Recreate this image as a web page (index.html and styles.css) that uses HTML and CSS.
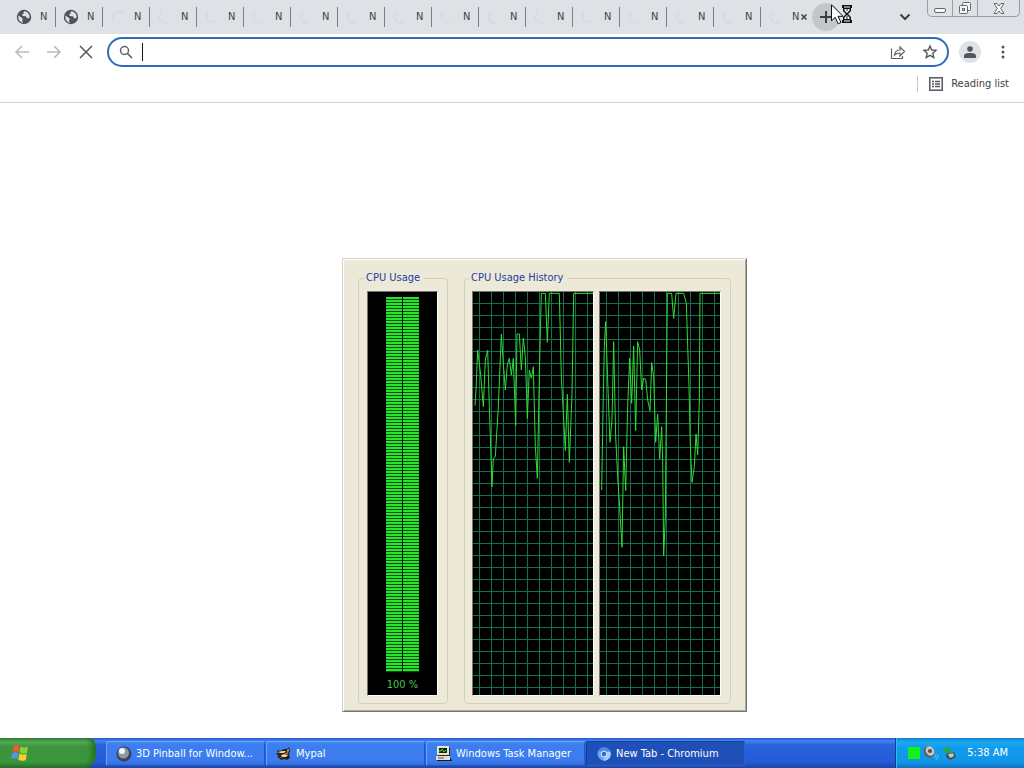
FILE: index.html
```html
<!DOCTYPE html>
<html lang="en">
<head>
<meta charset="utf-8">
<title>New Tab - Chromium</title>
<link rel="stylesheet" href="styles.css">
</head>
<body>
<svg class="defs" aria-hidden="true">
  <symbol id="globe" viewBox="0 0 16 16"><circle cx="8" cy="8" r="7.2" fill="#50545a"/><path d="M2.5 6.5 6 9l1 1.2-1 1 .8 2.6C4.500 13.300 2.300 11 2.300 8zM8.500 2.300c-1 .7-1.500 1.400-.6 2.200l-2 1.300 1 1.200 3 .3 1.300 2.200 2.400-.7c.4-3-1.800-5.900-5.100-6.500z" fill="#dee1e6"/></symbol>
  <symbol id="spin" viewBox="0 0 16 16"><path d="M5 2.500C1.500 5 1.500 10 5 12.500c2 1.300 4 1.500 6 .5" fill="none" stroke="#cddcea" stroke-width="1.600"/></symbol>
</svg>
<div class="screen">
  <header class="tabstrip">
    <div class="tabs" role="tablist">
      <button class="tab" role="tab"><svg><use href="#globe"/></svg><span>N</span></button>
      <button class="tab" role="tab"><svg><use href="#globe"/></svg><span>N</span></button>
      <button class="tab" role="tab"><svg class="turned"><use href="#spin"/></svg><span>N</span></button>
      <button class="tab" role="tab"><svg><use href="#spin"/></svg><span>N</span></button>
      <button class="tab" role="tab"><svg><use href="#spin"/></svg><span>N</span></button>
      <button class="tab" role="tab"><svg><use href="#spin"/></svg><span>N</span></button>
      <button class="tab" role="tab"><svg><use href="#spin"/></svg><span>N</span></button>
      <button class="tab" role="tab"><svg><use href="#spin"/></svg><span>N</span></button>
      <button class="tab" role="tab"><svg><use href="#spin"/></svg><span>N</span></button>
      <button class="tab" role="tab"><svg><use href="#spin"/></svg><span>N</span></button>
      <button class="tab" role="tab"><svg><use href="#spin"/></svg><span>N</span></button>
      <button class="tab" role="tab"><svg><use href="#spin"/></svg><span>N</span></button>
      <button class="tab" role="tab"><svg><use href="#spin"/></svg><span>N</span></button>
      <button class="tab" role="tab"><svg><use href="#spin"/></svg><span>N</span></button>
      <button class="tab" role="tab"><svg><use href="#spin"/></svg><span>N</span></button>
      <button class="tab" role="tab"><svg><use href="#spin"/></svg><span>N</span></button>
      <button class="tab current" role="tab" aria-selected="true"><svg><use href="#spin"/></svg><span>N</span></button>
    </div>
    <button class="tab-close" aria-label="Close tab"><svg width="6" height="6" viewBox="0 0 6 6"><path d="M.5.5l5 5M5.500.5l-5 5" stroke="#3c4043" stroke-width="1.500"/></svg></button>
    <button class="new-tab" aria-label="New tab"><svg width="12" height="12" viewBox="0 0 12 12"><path d="M6 0v12M0 6h12" stroke="#3c4043" stroke-width="2"/></svg></button>
    <button class="tab-search" aria-label="Search tabs"><svg width="12" height="8" viewBox="0 0 12 8"><path d="M1.500 1.500 6 6l4.500-4.500" fill="none" stroke="#3c4043" stroke-width="2"/></svg></button>
    <div class="window-buttons">
      <button class="small" aria-label="Minimize"><svg width="14" height="17" viewBox="0 0 14 17"><rect x="1.500" y="8.500" width="11" height="4" rx="1.500" fill="#f6f7f8" stroke="#62666b"/></svg></button>
      <button class="small" aria-label="Restore"><svg width="14" height="17" viewBox="0 0 14 17"><g fill="#f4f5f7" stroke="#62666b"><rect x="4.500" y="2.500" width="8" height="8" rx="1"/><rect x="1.500" y="5.500" width="8" height="8" rx="1"/><rect x="4.500" y="8.500" width="2" height="2"/></g></svg></button>
      <button class="large" aria-label="Close"><svg width="14" height="17" viewBox="0 0 14 17"><path d="M2 3.500h3l2 2.500 2-2.500h3L8.700 8.500l3.300 5H9L7 11l-2 2.500H2l3.300-5z" fill="#f6f7f8" stroke="#62666b"/></svg></button>
    </div>
  </header>

  <nav class="toolbar">
    <button aria-label="Back"><svg width="16" height="16" viewBox="0 0 16 16"><path d="M15 8H2M8 2 2 8l6 6" fill="none" stroke="#b9bbbe" stroke-width="1.600"/></svg></button>
    <button aria-label="Forward"><svg width="16" height="16" viewBox="0 0 16 16"><path d="M1 8h13M8 2l6 6-6 6" fill="none" stroke="#b9bbbe" stroke-width="1.600"/></svg></button>
    <button aria-label="Stop"><svg width="16" height="16" viewBox="0 0 16 16"><path d="M2 2l12 12M14 2 2 14" stroke="#54585d" stroke-width="1.500"/></svg></button>
    <div class="omnibox">
      <svg width="14" height="14" viewBox="0 0 14 14"><circle cx="5.500" cy="5.500" r="4" fill="none" stroke="#5f6368" stroke-width="1.500"/><path d="M8.500 8.500 13 13" stroke="#5f6368" stroke-width="1.700"/></svg>
      <span class="caret"></span>
      <input type="text" aria-label="Address and search bar">
      <button aria-label="Share"><svg width="16" height="16" viewBox="0 0 16 16"><path d="M1.500 4.500v10h11V12M4.500 11C5 7.500 7 6 10 6V3l4.500 4.500L10 12V9C7.500 9 6 9.500 4.500 11z" fill="none" stroke="#5f6368" stroke-width="1.200"/></svg></button>
      <button aria-label="Bookmark this tab"><svg width="16" height="16" viewBox="0 0 16 16"><path d="M8 2l1.700 4 4.300.4-3.200 2.900 1 4.300L8 11.300l-3.800 2.300 1-4.300L2 6.400 6.300 6z" fill="none" stroke="#54585d" stroke-width="1.400"/></svg></button>
    </div>
    <button class="profile" aria-label="Profile"><svg width="12" height="12" viewBox="0 0 12 12"><circle cx="6" cy="3" r="2.800" fill="#50555e"/><path d="M0 12V9.500C0 7.800 3 7 6 7s6 .8 6 2.500V12z" fill="#50555e"/></svg></button>
    <button aria-label="Menu"><svg width="4" height="14" viewBox="0 0 4 14"><g fill="#54585d"><circle cx="2" cy="2" r="1.500"/><circle cx="2" cy="7" r="1.500"/><circle cx="2" cy="12" r="1.500"/></g></svg></button>
  </nav>

  <div class="bookmarks">
    <button class="reading"><svg width="14" height="14" viewBox="0 0 14 14"><rect x=".8" y=".8" width="12.400" height="12.400" fill="none" stroke="#54585d" stroke-width="1.500"/><path d="M3 4.500h2M3 7h2M3 9.500h2M6 4.500h5M6 7h5M6 9.500h5" stroke="#54585d" stroke-width="1.300"/></svg><span>Reading list</span></button>
  </div>

  <main class="page"></main>

  <footer class="taskbar">
    <button class="start" aria-label="Start"><svg width="20" height="20" viewBox="0 0 20 20"><path d="M3.500 3.500Q7 1 9.500 3L8.500 9Q5.500 7.500 2.500 9z" fill="#ee5a2a"/><path d="M10.500 3.500Q14 5.500 18 3.500L17 10Q13 11.500 9.500 9.500z" fill="#8ccf3c"/><path d="M2.300 10Q5.500 8.500 8.300 10.200L7.300 16.300Q4 14.500 1.200 16z" fill="#5b92f0"/><path d="M9.300 10.600Q13 12.500 16.800 11L15.800 17Q12 18.800 8.300 16.800z" fill="#f8cf33"/></svg></button>
    <div class="tasks">
      <button class="task"><svg width="16" height="16" viewBox="0 0 16 16"><circle cx="8" cy="8" r="7.500" fill="#3b4350"/><circle cx="7.500" cy="7" r="5.500" fill="#8e9aa8"/><circle cx="6" cy="5" r="3" fill="#f3f6fa"/></svg><span>3D Pinball for Window...</span></button>
      <button class="task"><svg width="16" height="16" viewBox="0 0 16 16"><path d="M1 4l3 1 4-2 3 0 2-2 1 4-1 3 1 4-3 2-3-1-3 1-2-2-2-1 2-1-3-2 2-1z" fill="#2b211a"/><path d="M2 6l4-1 4 0-2 2-4 0zM5 9l4-1 3 1-2 2-4 0zM11 4l2-1-1 4z" fill="#ead6aa"/><path d="M9 7l3-1v2l-3 1zM3 11h3v1z" fill="#b56b2b"/></svg><span>Mypal</span></button>
      <button class="task"><svg width="16" height="16" viewBox="0 0 16 16"><path d="M2 1h11l1 1v8H2z" fill="#25251f"/><path d="M1 0h12v9H1z" fill="#e6e4d4"/><path d="M3 2h8v5H3z" fill="#09260d"/><path d="M3 5h2l1-2 2 3 2-2" fill="none" stroke="#46db48"/><path d="M1 11h13l2 4H1z" fill="#191919"/><path d="M0 10h14v4H0z" fill="#e3e0d0"/><path d="M2 12h6" stroke="#555"/></svg><span>Windows Task Manager</span></button>
      <button class="task active"><svg width="16" height="16" viewBox="0 0 16 16"><circle cx="8" cy="8" r="6.500" fill="#6ca4f3"/><path d="M8 5h6a6.500 6.500 0 0 1-7 9.500l3-5z" fill="#a8cbfa"/><path d="M8 8 2.500 4.500A6.500 6.500 0 0 1 14 5z" fill="#5189e4"/><circle cx="8" cy="8" r="3.200" fill="#cfe1fc"/><circle cx="8" cy="8" r="2.200" fill="#2b66d1"/></svg><span>New Tab - Chromium</span></button>
    </div>
    <div class="tray">
      <span class="meter"></span>
      <svg width="16" height="16" viewBox="0 0 16 16"><ellipse cx="6" cy="7" rx="5" ry="6" transform="rotate(-30 6 7)" fill="#5d6062"/><ellipse cx="7" cy="6" rx="4" ry="5" transform="rotate(-30 7 6)" fill="#c7c8c2"/><circle cx="7" cy="6" r="2" fill="#4c5052"/><path d="M11 13q2-1 2-4M13 15q2-2 2-5" fill="none" stroke="#8ab6d8"/></svg>
      <svg width="16" height="16" viewBox="0 0 16 16"><path d="M5 8l7-1 2 5-6 3-4-3z" fill="#464c4f"/><path d="M6 9l5-1 1 3-4 2z" fill="#c5cac7"/><path d="M1 5l6-4v3l4 4-2 1-4-3-1 3z" fill="#21ad36"/></svg>
      <time>5:38 AM</time>
    </div>
  </footer>

  <section class="manager" aria-label="CPU performance">
    <fieldset class="group usage">
      <legend>CPU Usage</legend>
      <div class="well gauge"><div class="bars"><i></i><i></i></div><output>100 %</output></div>
    </fieldset>
    <fieldset class="group history">
      <legend>CPU Usage History</legend>
      <div class="well graph"><svg viewBox="21 96 360 1209" preserveAspectRatio="none"><polyline points="27,437 30,390 35,270 44,345 52,440 58,300 65,270 70,440 78,680 82,595 88,590 97,440 106,222 112,310 118,390 124,315 130,295 136,345 142,295 149,497 153,222 160,222 166,330 172,235 178,290 184,475 190,330 196,355 202,320 208,560 214,655 221,300 226,100 238,100 244,247 250,100 280,100 286,350 292,460 298,572 304,403 310,607 318,400 323,100 383,100"/></svg></div>
      <div class="well graph"><svg viewBox="14 96 360 1209" preserveAspectRatio="none"><polyline points="19,690 24,400 27,260 31,185 37,360 44,547 50,480 55,245 61,530 67,650 73,740 80,862 85,560 91,692 97,440 103,295 109,430 115,258 121,512 127,245 133,270 139,390 145,355 151,357 157,420 164,452 169,308 175,350 181,547 187,462 193,597 199,500 202,600 205,887 210,770 214,345 216,100 229,100 235,175 242,100 265,100 273,130 281,380 285,560 290,667 297,620 302,522 307,585 312,420 314,100 376,100"/></svg></div>
    </fieldset>
  </section>

  <svg class="pointer" width="26" height="22" viewBox="0 0 26 22" aria-hidden="true">
    <path d="M1.500.8v16l3.700-3.500 3 6.500 2.800-1.300-3-6.200h5z" fill="#fff" stroke="#111"/>
    <path d="M12 1h10v3h-1v3l-3 3 3 3v3h1v3H12v-3h1v-3l3-3-3-3V4h-1z" fill="#111"/>
    <path d="M14 3h6M14 17h6" stroke="#fff"/><path d="M14.500 5h5v1.500L17 9l-2.500-2.500zM17 11l2.500 2.500V15h-5v-1.500z" fill="#fff"/><path d="M16 6h2M17 12v2M16 15h2" stroke="#111"/>
  </svg>
</div>
</body>
</html>
```

FILE: styles.css
```css
* { box-sizing: border-box; }
body {
  margin: 0;
  font: 11px/14px "DejaVu Sans Condensed", "Noto Sans", sans-serif;
  color: #3c4043;
}
button { margin: 0; padding: 0; border: 0; background: none; font: inherit; color: inherit; }
svg { display: block; flex: none; }
.defs { position: absolute; width: 0; height: 0; }
.screen { position: relative; display: flex; flex-direction: column; min-height: 100vh; background: #fff; overflow: hidden; }

.tabstrip { display: flex; align-items: flex-start; height: 34px; padding: 0 4px 0 9px; background: #dee1e6; }
.tabs { display: flex; }
.tab { display: flex; align-items: center; gap: 8px; width: 47px; height: 20px; margin-top: 7px; padding-left: 7px; border-right: 1px solid #7c8085; }
.tab svg { width: 16px; height: 16px; }
.tab .turned { transform: rotate(90deg); }
.tab.current { width: 40px; border: 0; }
.tab-close { padding: 14px 2px 0 0; }
.new-tab { display: grid; place-items: center; width: 28px; height: 28px; margin: 3px 0 0 3px; border-radius: 50%; background: #c3c6ca; }
.tab-search { margin: 13px 16px 0 auto; }
.window-buttons { display: flex; height: 17px; border: 1px solid #9a9ea4; border-top: 0; border-radius: 0 0 5px 5px; }
.window-buttons button { display: grid; place-items: center; }
.window-buttons .small { width: 25px; border-right: 1px solid #9a9ea4; }
.window-buttons .large { width: 41px; }

.toolbar { display: flex; align-items: center; gap: 16px; height: 36px; padding: 0 19px 0 14px; }
.omnibox { display: flex; flex: 1; align-items: center; height: 30px; margin-left: -3px; padding: 0 9px 0 10px; border: 2px solid #2e6cb8; border-radius: 15px; }
.caret { width: 1px; height: 18px; margin-left: 9px; background: #111; }
.omnibox input { flex: 1; min-width: 0; border: 0; outline: 0; background: none; font: inherit; }
.omnibox button + button { margin-left: 16px; }
.profile { display: grid; place-items: center; width: 22px; height: 22px; margin: 0 4px 0 -6px; border-radius: 50%; background: #dee1e6; }

.bookmarks { display: flex; justify-content: flex-end; align-items: center; height: 33px; padding: 0 15px 4px 0; border-bottom: 1px solid #d2d4d7; }
.reading { display: flex; align-items: center; gap: 8px; height: 16px; padding-left: 11px; border-left: 1px solid #c6c9cd; }
.page { flex: 1; }

.manager {
  position: absolute; left: 342px; top: 258px;
  display: flex; gap: 16px;
  padding: 12px 15px 7px;
  border: 1px solid; border-color: #d4d2c6 #77756d #77756d #d4d2c6;
  background: #ece9d8;
  box-shadow: inset 1px 1px #fff, inset -1px -1px #aca899;
}
.group { display: flex; min-width: 0; margin: 0; padding: 6px 9px 7px 8px; border: 1px solid #d2cfbd; border-radius: 4px; }
.group legend { padding: 0 4px 0 2px; margin-left: -3px; color: #1c3f9f; }
.well { height: 405px; border: 1px solid; border-color: #77756d #fff #fff #77756d; background-color: #000; }
.gauge { display: flex; flex-direction: column; align-items: center; width: 71px; padding-top: 5px; }
.bars { display: flex; gap: 1px; height: 375px; }
.bars i { width: 16px; background: repeating-linear-gradient(#25e62b 0 2px, #074c0b 2px 3px); }
.gauge output { margin-top: 6px; color: #45c74b; }
.history { gap: 5px; padding-left: 7px; }
.graph {
  width: 122px;
  background-image: linear-gradient(90deg, #14704c 1px, transparent 1px), linear-gradient(#14704c 1px, transparent 1px);
  background-size: 12px 12px;
  background-position: 6px 11px;
}
.graph svg { width: 100%; height: 100%; }
.graph polyline { fill: none; stroke: #2fdc35; stroke-width: 1px; vector-effect: non-scaling-stroke; }

.taskbar { display: flex; height: 30px; color: #fff; background: linear-gradient(#2458c8 0, #3f86f0 3px, #2a62dc 7px, #245bd8 24px, #1c45a8); }
.start { width: 96px; padding-left: 10px; border-radius: 0 8px 12px 0; background: linear-gradient(#388b39, #57ab56 4px, #3c933b 9px, #3a983a 24px, #2a712a); box-shadow: inset -4px 0 5px #276f2d; }
.tasks { display: flex; flex: 1; min-width: 0; gap: 1px; padding: 3px 0 2px 10px; }
.task { display: flex; align-items: center; gap: 4px; width: 159px; min-width: 0; padding: 0 8px 0 10px; border-radius: 2px; background: linear-gradient(#4a8cf6, #3c7ef0 4px, #3b7bed 20px, #3068d8); box-shadow: inset 1px 1px #6ba2f8, inset -1px -1px #2458c4; }
.task span { flex: 1; min-width: 0; overflow: hidden; text-align: left; text-overflow: ellipsis; white-space: nowrap; }
.task.active { background: #1e50b8; box-shadow: inset 1px 1px #153d92, inset -1px -1px #2a62cb; }
.tray { display: flex; align-items: center; gap: 3px; padding: 0 16px 0 12px; border-left: 1px solid #103d91; background: linear-gradient(#157fd0, #1ba9f3 4px, #129bec 10px, #1196e8 24px, #0f72c0); box-shadow: inset 1px 0 #38b8f5; }
.meter { width: 12px; height: 12px; background: #13f01b; }
.tray time { margin-left: 6px; }

.pointer { position: absolute; left: 830px; top: 4px; }
```
